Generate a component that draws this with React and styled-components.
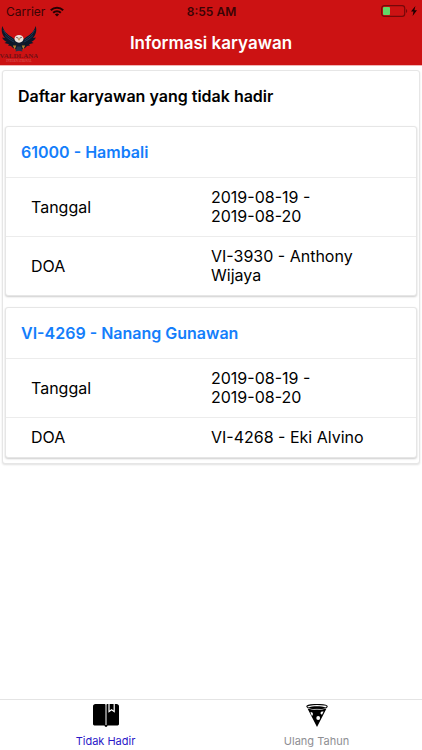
import React, { useState } from "react";
import styled, { createGlobalStyle } from "styled-components";

const GlobalStyle = createGlobalStyle`
  * {
    box-sizing: border-box;
  }
  body {
    margin: 0;
    background: #fff;
    color: #000;
    font-family: Inter, "Liberation Sans", sans-serif;
  }
  h1, h2, h3, dl, dt, dd {
    margin: 0;
    font-weight: 400;
  }
`;

const Screen = styled.div`
  display: flex;
  flex-direction: column;
  min-height: 100vh;
`;

const TopBar = styled.header`
  background: #cc1213;
  border-bottom: 1px solid #f0b4b4;
`;

const StatusBar = styled.div`
  display: grid;
  grid-template-columns: 1fr auto 1fr;
  align-items: center;
  height: 22px;
  padding: 0 5px 0 6px;
  color: #3a0405;
  font-size: 12px;
`;

const StatusGroup = styled.div`
  display: flex;
  align-items: center;
  justify-content: ${(props) => (props.$end ? "flex-end" : "flex-start")};
  gap: ${(props) => (props.$end ? "3px" : "5px")};
`;

const Clock = styled.time`
  font-weight: 600;
`;

const TitleBar = styled.div`
  display: grid;
  grid-template-columns: 1fr auto 1fr;
  align-items: center;
  height: 43px;
  padding-bottom: 1px;
`;

const Title = styled.h1`
  color: #fff;
  font-size: 17px;
  font-weight: 600;
  line-height: 20px;
`;

const Content = styled.main`
  flex: 1;
  padding: 4px 2px;
`;

const Card = styled.section`
  border: 1px solid #e6e6e6;
  border-radius: 3px;
  background: #fff;
  box-shadow: 0 1px 2px rgba(0, 0, 0, 0.12);
`;

const ListCard = styled(Card)`
  padding: 0 2px 5px;
`;

const ListTitle = styled.h2`
  padding: 15px 13px 20px;
  font-size: 16px;
  font-weight: 600;
  line-height: 20px;
`;

const CardList = styled.div`
  display: flex;
  flex-direction: column;
  gap: 11px;
`;

const EmployeeCard = styled(Card)`
  box-shadow: 0 1px 2px rgba(0, 0, 0, 0.2);
`;

const EmployeeName = styled.h3`
  padding: 15px;
  color: #147efb;
  font-size: 16px;
  font-weight: 600;
  line-height: 20px;
`;

const Row = styled.div`
  display: grid;
  grid-template-columns: 1fr 1fr;
  align-items: center;
  padding: 10px 0;
  border-top: 1px solid #ececec;
  font-size: 16px;
  line-height: 19px;
`;

const Label = styled.dt`
  padding-left: 25px;
`;

const Value = styled.dd`
  padding-right: 25px;
`;

const DateText = styled.span`
  white-space: nowrap;
`;

const TabBar = styled.nav`
  display: flex;
  height: 51px;
  border-top: 1px solid #e4e4e4;
  background: #fff;
`;

const Tab = styled.button`
  display: flex;
  flex: 1;
  flex-direction: column;
  align-items: center;
  gap: 6px;
  padding: 4px 0 0;
  border: 0;
  background: none;
  color: ${(props) => (props.$active ? "#2a18c8" : "#8e8e93")};
  font-family: inherit;
  font-size: 11px;
  line-height: 14px;
  cursor: pointer;
`;

const employees = [
  {
    id: "61000",
    name: "Hambali",
    from: "2019-08-19",
    to: "2019-08-20",
    doa: "VI-3930 - Anthony Wijaya",
  },
  {
    id: "VI-4269",
    name: "Nanang Gunawan",
    from: "2019-08-19",
    to: "2019-08-20",
    doa: "VI-4268 - Eki Alvino",
  },
];

function WifiIcon() {
  return (
    <svg width="14" height="11" viewBox="0 0 14 11" fill="none" stroke="#250203" strokeWidth="2">
      <path d="M0.8 4.2a8.8 8.8 0 0 1 12.4 0" />
      <path d="M3.2 6.8a5.4 5.4 0 0 1 7.6 0" />
      <path d="M7 10.6 4.9 8.5a3 3 0 0 1 4.2 0z" fill="#250203" stroke="none" />
    </svg>
  );
}

function BatteryIcon() {
  return (
    <svg width="27" height="12" viewBox="0 0 27 12">
      <rect x="0.7" y="0.7" width="23" height="10.6" rx="2.6" fill="none" stroke="#76080a" strokeWidth="1.2" />
      <rect x="2" y="2" width="7" height="8" rx="1" fill="#62d867" />
      <path d="M25 4v4c1.6-.6 1.6-3.4 0-4z" fill="#76080a" />
    </svg>
  );
}

function BoltIcon() {
  return (
    <svg width="6" height="10" viewBox="0 0 6 10">
      <path d="M4.4 0 0 5.6h2.5L1.6 10 6 4.2H3.4z" fill="#1c0102" />
    </svg>
  );
}

const BrandText = styled.text`
  font-family: "Liberation Serif", serif;
  font-weight: 700;
  text-anchor: middle;
`;

function Logo() {
  return (
    <svg width="38" height="40" viewBox="0 0 38 40" role="img" aria-label="Valdlana">
      <path d="M2.5 3c1 5 5 8.5 8.5 10.5l4 3 3 5-2 5c-2-1-4-2-5-3.5l-3-.5 1-1.2-4.5-1.3 2-1.2c-2-.8-3.5-2.3-4.3-4.3l2.8.5C1.5 11 1 6.5 2.5 3z" fill="#0c1728" />
      <path d="M35.5 3c-1 5-5 8.5-8.5 10.5l-4 3-3 5 2 5c2-1 4-2 5-3.5l3-.5-1-1.2 4.5-1.3-2-1.2c2-.8 3.5-2.3 4.3-4.3l-2.8.5C36.5 11 37 6.5 35.5 3z" fill="#0c1728" />
      <path d="M3.5 7c2 4.5 5 7 10 10M5 12.5c3 3 5 4.5 9 6.500M34.5 7c-2 4.5-5 7-10 10M33 12.5c-3 3-5 4.5-9 6.5" fill="none" stroke="#24486a" strokeWidth="0.7" />
      <path d="M14.500 17h9l1.500 5-3 4-3 1-3-1-3-4z" fill="#101a2c" />
      <ellipse cx="19" cy="15.8" rx="4.5" ry="3.9" fill="#eee3dd" />
      <path d="m16.2 14.3 2.2.9M21.8 14.3l-2.2.9" stroke="#443235" strokeWidth="0.8" />
      <path d="m17.8 15.5 1.2 2.6 1.2-2.6z" fill="#b98f42" />
      <path d="M12.8 22.5h3.400l-1.400 4zM21.8 22.5h3.400l-2 4z" fill="#b08030" />
      <path d="m17 23.5-1.500 5 3.500-.8 3.500.8-1.500-5z" fill="#23334a" />
      <BrandText x="19" y="35" fontSize="7" fill="#721116">VALDLANA</BrandText>
      <BrandText x="19" y="39" fontSize="3" fill="#d85050">INTERNATIONAL</BrandText>
    </svg>
  );
}

function BookIcon() {
  return (
    <svg width="26" height="24" viewBox="0 0 26 24" aria-hidden="true">
      <path d="M2.4 0h9.2c.6 0 .9.3.9.8v20.7H1.4C.6 21.5 0 20.9 0 20.1V2.2C0 1 1 0 2.4 0z" />
      <path d="M14.4 0h1v8.8l3.200-2.300 3.200 2.300V0h1.800C25 0 26 1 26 2.200v17.900c0 .8-.6 1.400-1.400 1.400H13.500V.8c0-.5.3-.8.9-.8z" />
      <path d="M16.6 0h4v6.600l-2-1.500-2 1.500z" />
      <path d="M11.5 21h3c0 1.300-.7 2-1.500 2s-1.500-.7-1.500-2z" />
    </svg>
  );
}

function PizzaIcon() {
  return (
    <svg width="22" height="24" viewBox="0 0 22 24" aria-hidden="true">
      <path d="M1.5 4.5c5 1.700 14 1.700 19 0L11 23z" />
      <ellipse cx="11" cy="2.600" rx="10.200" ry="2.100" fill="#fff" stroke="#000" strokeWidth="1.100" />
      <path d="M2.200 3.400c4-1.600 13.600-1.600 17.600 0-4 1.600-13.600 1.600-17.600 0z" />
      <path d="M4.400 8.600c1.200-.7 2.500 0 2.500 1.400 0 1.100-.5 1.700-1.100 1.800z" fill="#fff" />
      <path d="m17.600 7.600-1.500 2.900c-1 0-1.700-.7-1.600-1.500.1-1.200 1.500-2 3.100-1.400z" fill="#fff" />
      <circle cx="12.200" cy="14" r="1.900" fill="#fff" />
    </svg>
  );
}

function AbsenceCard({ employee }) {
  return (
    <EmployeeCard>
      <EmployeeName>
        {employee.id} - {employee.name}
      </EmployeeName>
      <dl>
        <Row>
          <Label>Tanggal</Label>
          <Value>
            <DateText>{employee.from} -</DateText> <DateText>{employee.to}</DateText>
          </Value>
        </Row>
        <Row>
          <Label>DOA</Label>
          <Value>{employee.doa}</Value>
        </Row>
      </dl>
    </EmployeeCard>
  );
}

function App() {
  const [tab, setTab] = useState("absent");

  return (
    <>
      <GlobalStyle />
      <Screen>
        <TopBar>
          <StatusBar>
            <StatusGroup>
              <span>Carrier</span>
              <WifiIcon />
            </StatusGroup>
            <Clock>8:55 AM</Clock>
            <StatusGroup $end>
              <BatteryIcon />
              <BoltIcon />
            </StatusGroup>
          </StatusBar>
          <TitleBar>
            <Logo />
            <Title>Informasi karyawan</Title>
          </TitleBar>
        </TopBar>
        <Content>
          <ListCard>
            <ListTitle>Daftar karyawan yang tidak hadir</ListTitle>
            <CardList>
              {employees.map((employee) => (
                <AbsenceCard key={employee.id} employee={employee} />
              ))}
            </CardList>
          </ListCard>
        </Content>
        <TabBar>
          <Tab type="button" $active={tab === "absent"} onClick={() => setTab("absent")}>
            <BookIcon />
            Tidak Hadir
          </Tab>
          <Tab type="button" $active={tab === "birthday"} onClick={() => setTab("birthday")}>
            <PizzaIcon />
            Ulang Tahun
          </Tab>
        </TabBar>
      </Screen>
    </>
  );
}

export default App;
